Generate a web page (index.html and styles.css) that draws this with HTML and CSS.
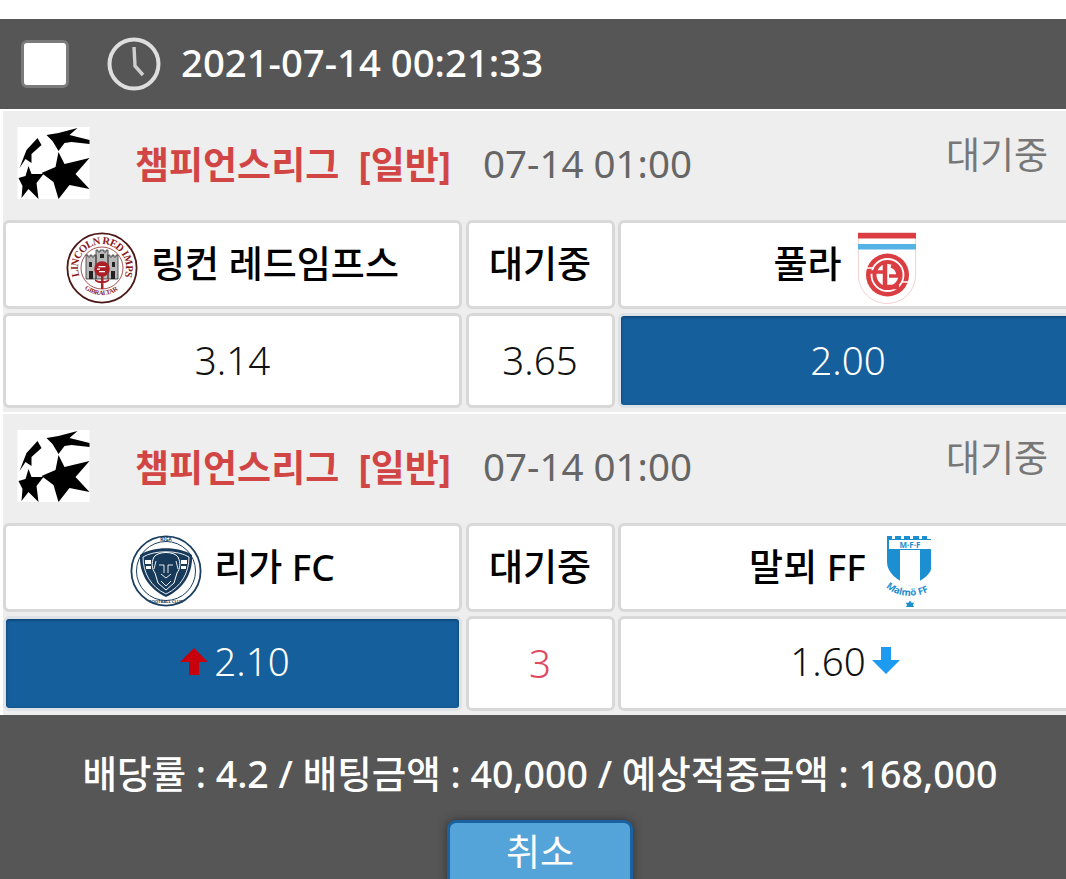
FILE: index.html
```html
<!DOCTYPE html>
<html lang="ko">
<head>
<meta charset="utf-8">
<title>배팅 내역</title>
<link rel="stylesheet" href="styles.css">
</head>
<body>
<svg class="defs" width="0" height="0" aria-hidden="true">
  <symbol id="ball" viewBox="0 0 72 72">
    <rect width="72" height="72" fill="#fff"/>
    <path fill="#000" d="M41 25 47 37 72 31 58 47 72 62 52 58 41 72 36 55 24 46 38 40Z"/>
    <path fill="#000" d="M29 8 41 6 60 1 52 8 72 13 72 17 54 15 47 16 41 24 35 14Z"/>
    <path fill="#000" d="M20 11 9 23 2 41 8 32 14 36 14 27 24 18Z"/>
    <path fill="#000" d="M11 39 14 47 26 47 19 56 21 72 11 62 4 71 5 59 1 51 8 49Z"/>
  </symbol>
</svg>

<main class="page">
  <header class="topbar">
    <span class="check"></span>
    <svg class="clock" viewBox="0 0 54 54" aria-hidden="true">
      <circle cx="27" cy="27" r="24.500" fill="none" stroke="#dedede" stroke-width="4"/>
      <path d="M27 10 28 29 36 38" fill="none" stroke="#cfcfcf" stroke-width="3.400"/>
    </svg>
    <span class="stamp">2021-07-14 00:21:33</span>
  </header>

  <section class="match">
    <div class="league">
      <svg class="ball"><use href="#ball"/></svg>
      <strong class="league-name">챔피언스리그&nbsp; [일반]</strong>
      <span class="kickoff">07-14 01:00</span>
      <span class="status">대기중</span>
    </div>
    <div class="board">
      <div class="cell team">
        <svg class="crest" viewBox="0 0 72 72">
          <defs>
            <path id="lincoln-top" d="M13.400 44.200A24 24 0 1 1 58.600 44.200"/>
            <path id="lincoln-bottom" d="M18.600 56.700A27 27 0 0 0 53.400 56.700"/>
          </defs>
          <circle cx="36" cy="36" r="34.600" fill="#fff" stroke="#4c1818" stroke-width="1.800"/>
          <circle cx="36" cy="36" r="21" fill="#fff" stroke="#8d2a2a" stroke-width=".8"/>
          <text class="crest-text" fill="#8a1a20" font-size="10.500"><textPath href="#lincoln-top" textLength="92">LINCOLN RED IMPS</textPath></text>
          <text class="crest-text" fill="#8a1a20" font-size="6.500"><textPath href="#lincoln-bottom" textLength="36">GIBRALTAR</textPath></text>
          <path fill="#b9b9b9" stroke="#333" stroke-width=".8" d="M20 23h2v2h2v-2h2v2h2v-2h2v24H20zM42 23h2v2h2v-2h2v2h2v-2h2v24H42zM30 18h2v2h2v-2h4v2h2v-2h2v29H30z"/>
          <path fill="#222" d="M23 30h3v5h-3zM46 30h3v5h-3zM23 39h4v8h-4zM45 39h4v8h-4zM34 22h4v4h-4z"/>
          <circle cx="36" cy="37" r="7.800" fill="#ab2027"/>
          <path fill="#ab2027" d="M35 44h2.500v13H35zM29 47c3 3 11 3 14 0v2c-4 3-10 3-14 0z"/>
          <path fill="#fff" d="M32.500 34h7v1.300h-7zM33 39h6v1.300h-6zM31 36.500h3v1.300h-3z"/>
        </svg>
        <span class="team-name">링컨 레드임프스</span>
      </div>
      <div class="cell team"><span class="team-name">대기중</span></div>
      <div class="cell team">
        <span class="team-name">풀라</span>
        <svg class="crest crest-right" viewBox="0 0 58 72">
          <path fill="#fff" stroke="#e6b2b2" stroke-width=".6" d="M.4.4h57.200v42c0 16-12 29-28.600 29S.4 58.400.4 42.400z"/>
          <path fill="#da3d42" d="M0 1h58v5.500H0z"/>
          <path fill="#54b2e5" d="M0 12h58v5.500H0z"/>
          <circle cx="29.500" cy="43" r="21.500" fill="#da3d42"/>
          <circle cx="29.500" cy="43" r="16" fill="none" stroke="#fff" stroke-width="1.800"/>
          <circle cx="29.500" cy="43" r="11" fill="#fff"/>
          <path fill="none" stroke="#da3d42" stroke-width="4.500" d="M27 31V55H41"/>
          <path fill="none" stroke="#da3d42" stroke-width="3.600" d="M12 40H27M33 34c4 1 7 5 7 10H31"/>
          <path fill="none" stroke="#fff" stroke-width="1.500" d="M9 36H16M44 50H50"/>
        </svg>
      </div>
      <div class="cell odd">3.14</div>
      <div class="cell odd">3.65</div>
      <div class="cell odd picked">2.00</div>
    </div>
  </section>

  <section class="match">
    <div class="league">
      <svg class="ball"><use href="#ball"/></svg>
      <strong class="league-name">챔피언스리그&nbsp; [일반]</strong>
      <span class="kickoff">07-14 01:00</span>
      <span class="status">대기중</span>
    </div>
    <div class="board">
      <div class="cell team">
        <svg class="crest crest-riga" viewBox="0 0 72 72">
          <circle cx="36" cy="36" r="34.600" fill="#fff" stroke="#1c3f61" stroke-width="1.800"/>
          <circle cx="36" cy="36" r="29.500" fill="none" stroke="#1c3f61" stroke-width="1"/>
          <text class="crest-text crest-sans" x="36" y="6" text-anchor="middle" fill="#1c3f61" font-size="4.600">RIGA</text>
          <path fill="#17395a" d="M10 20C22 11 50 11 62 20c1 19-9 34-26 42C19 54 9 39 10 20z"/>
          <path fill="none" stroke="#fff" stroke-width=".9" d="M13 22c11-7 35-7 46 0 0 16-8 30-23 37-15-7-23-21-23-37z"/>
          <path fill="#fff" d="M15 25h6v4h-6zM51 25h6v4h-6zM16 31h5v3h-5zM51 31h5v3h-5z"/>
          <path fill="none" stroke="#fff" stroke-width="1" d="M24 22c4-6 20-6 24 0 3 6 2 12-1 16l-3 10-8 7-8-7-3-10c-3-4-4-10-1-16z"/>
          <path fill="none" stroke="#fff" stroke-width=".9" d="M29 30h5M38 30h5M34 30v8M38 30v8M31 39l5 4 5-4M31 46l5 5 5-5M26 26l-2 8M46 26l2 8"/>
          <text class="crest-text crest-sans" x="36" y="68" text-anchor="middle" fill="#1c3f61" font-size="4.200">FOOTBALL CLUB</text>
        </svg>
        <span class="team-name">리가 FC</span>
      </div>
      <div class="cell team"><span class="team-name">대기중</span></div>
      <div class="cell team">
        <span class="team-name">말뫼 FF</span>
        <svg class="crest crest-right" viewBox="0 0 52 72">
          <defs><path id="malmo-arc" d="M1 52C12 64 40 64 52 50"/></defs>
          <path fill="#1d8ecf" d="M2 1h5v3h3V1h6v3h3V1h6v3h3V1h6v3h3V1h5v3h4v27C48 38 38 45 25 51 12 45 2 38 2 27z"/>
          <path fill="#fff" d="M4 5h42v9H4z"/>
          <path fill="#fff" d="M15 15h20v33l-10 3-10-3z"/>
          <text class="crest-text crest-sans" x="25" y="12.500" text-anchor="middle" fill="#1d8ecf" font-size="8">M·F·F</text>
          <text class="crest-text crest-sans" fill="#1d8ecf" font-size="9.500"><textPath href="#malmo-arc">Malmö FF</textPath></text>
          <path fill="#1d8ecf" d="M25 65.500l1.500 2.200 2.700 0-1.300 2.300 1.300 2.300-2.700 0-1.500 2.200-1.500-2.200-2.700 0 1.300-2.300-1.300-2.300 2.700 0z"/>
        </svg>
      </div>
      <div class="cell odd odd-raised odd-lead picked">
        <svg class="arrow arrow-lead" viewBox="0 0 28 28" aria-hidden="true"><path class="arrow-up" d="M14 1 28 15H19V28H9V15H0Z"/></svg>2.10
      </div>
      <div class="cell odd draw">3</div>
      <div class="cell odd odd-raised odd-trail">1.60<svg class="arrow arrow-trail" viewBox="0 0 28 28" aria-hidden="true"><path class="arrow-down" d="M9 0H19V13H28L14 27 0 13H9Z"/></svg></div>
    </div>
  </section>

  <footer class="summary">
    <p class="totals">배당률 : 4.2 / 배팅금액 : 40,000 / 예상적중금액 : 168,000</p>
    <button class="cancel" type="button">취소</button>
  </footer>
</main>
</body>
</html>
```

FILE: styles.css
```css
* { box-sizing: border-box; }

html, body {
  margin: 0;
  height: 100%;
  background: #fff;
}

body {
  overflow: hidden;
  font-family: "Noto Sans", "Noto Sans CJK KR", sans-serif;
}

.defs { position: absolute; }

.page {
  display: flex;
  flex-direction: column;
  height: 879px;
  padding-top: 19px;
  overflow: hidden;
}

.topbar {
  display: flex;
  align-items: center;
  flex: none;
  height: 90px;
  padding-left: 21px;
  background: #565656;
}

.check {
  width: 48px;
  height: 48px;
  border: 3px solid #7b7b7b;
  border-radius: 6px;
  background: #fff;
}

.clock {
  width: 54px;
  height: 54px;
  margin-left: 38px;
}

.stamp {
  margin: 0 0 4px 20px;
  font-size: 38.300px;
  font-weight: 500;
  color: #fff;
}

.match {
  flex: none;
  padding-top: 2px;
}

.league {
  display: flex;
  align-items: center;
  height: 106px;
  margin-left: 3px;
  padding: 0 18px 0 14px;
  background: #eee;
}

.ball {
  width: 73px;
  height: 72px;
  margin-bottom: 2px;
}

.league-name {
  margin: 0 0 2px 45px;
  font-size: 37px;
  font-weight: 700;
  color: #d24545;
}

.kickoff {
  margin: 0 0 2px 32px;
  font-size: 38.500px;
  font-weight: 400;
  color: #666;
}

.status {
  align-self: flex-start;
  margin: 15px 0 0 auto;
  font-size: 37px;
  color: #777;
}

.board {
  display: grid;
  grid-template-columns: 459px 149px 460px;
  grid-template-rows: 89px 95px;
  column-gap: 3.500px;
  row-gap: 4px;
  width: 1078px;
  margin-left: 3px;
  padding: 3px 0 4px;
  background: #eee;
}

.cell {
  display: flex;
  align-items: center;
  justify-content: center;
  border: 3px solid #d8d8d8;
  border-radius: 6px;
  background: #fff;
}

.team {
  gap: 13px;
  font-size: 37px;
  font-weight: 500;
  color: #000;
}

.team-name { margin-bottom: 6px; }

.crest {
  flex: none;
  width: 72px;
  height: 72px;
  margin-top: 6px;
}

.crest-right { margin-left: -4px; }
.crest-riga { margin-right: -1px; }

.crest-text {
  font-family: "Liberation Serif", serif;
  font-weight: 700;
}

.crest-sans { font-family: "Noto Sans", sans-serif; }

.odd {
  padding-bottom: 1px;
  font-size: 38.500px;
  font-weight: 300;
  color: #111;
}

.odd-raised { padding-bottom: 5px; }
.odd-lead { padding-left: 5px; }
.odd-trail { padding-right: 6px; }

.picked {
  border-color: #dde2e6;
  background: #155f9c;
  box-shadow: inset 0 1px 3px #0a3a66;
  color: #fff;
}

.draw { color: #e0485f; }

.arrow {
  flex: none;
  width: 28px;
  height: 28px;
}

.arrow-lead { margin-right: 6px; }
.arrow-trail { margin-left: 6px; }

.arrow-up { fill: #c8000b; }
.arrow-down { fill: #1d9bf0; }

.summary {
  display: flex;
  flex: 1;
  flex-direction: column;
  align-items: center;
  width: 1080px;
  background: #565656;
}

.totals {
  margin: 32px 0 0;
  font-size: 37.500px;
  font-weight: 500;
  line-height: 54px;
  white-space: nowrap;
  color: #fff;
}

.cancel {
  flex: none;
  width: 186px;
  height: 70px;
  margin-top: 19px;
  padding: 0 0 10px;
  border: 3px solid #1a629f;
  border-radius: 9px;
  background: #55a4d9;
  box-shadow: 0 0 8px #333;
  font: 400 37px "Noto Sans", "Noto Sans CJK KR", sans-serif;
  color: #fff;
}
```
